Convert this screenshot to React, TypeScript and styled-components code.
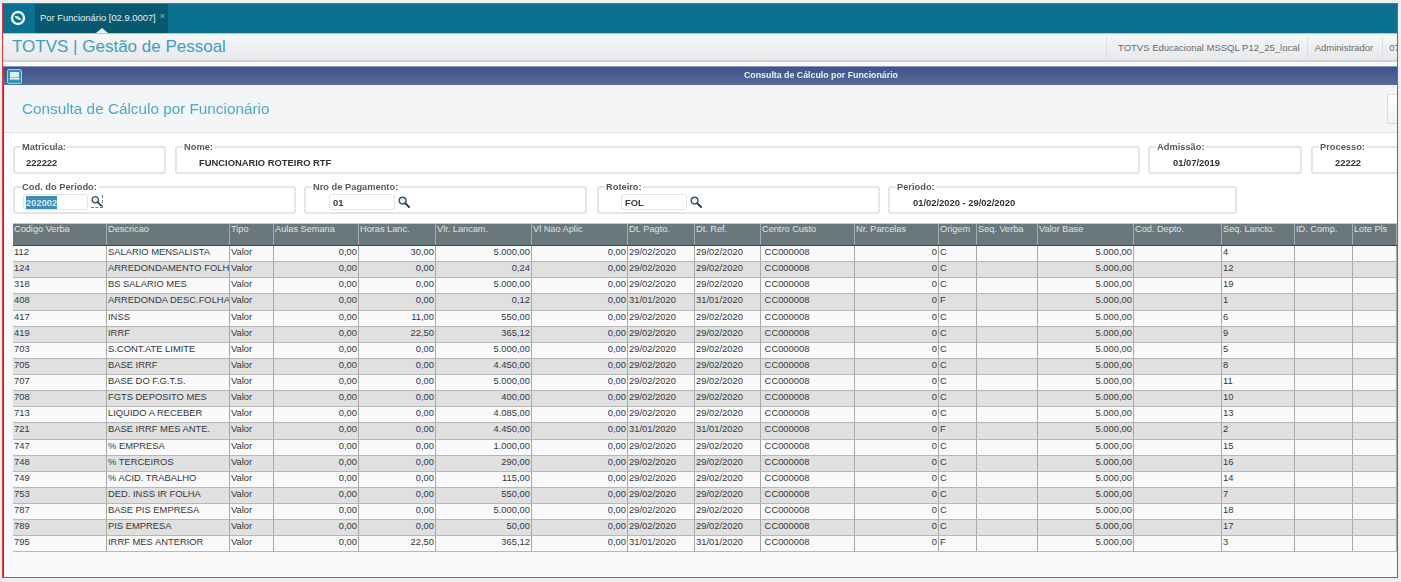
import React from "react";
import styled, { createGlobalStyle } from "styled-components";

const Global = createGlobalStyle`
  html, body { margin: 0; padding: 0; background: #efefef; overflow: hidden; }
  body { font-family: "Liberation Sans", Arial, sans-serif; }
`;

const Frame = styled.div`
  box-sizing: border-box;
  width: 1396px;
  height: 575px;
  margin: 3px 0 0 2px;
  border: 1px solid #e8383a;
  background: #fafafa;
  overflow: hidden;
`;
const Inner = styled.div`
  height: 100%;
  display: flex;
  flex-direction: column;
  filter: blur(0.35px);
`;
const TopBar = styled.div`
  height: 29px;
  flex: none;
  background: #0a7190;
  display: flex;
  align-items: stretch;
`;
const Logo = styled.div`
  width: 32px;
  box-sizing: border-box;
  padding: 0 0 2px 7px;
  display: flex;
  align-items: center;
`;
const Tab = styled.div`
  position: relative;
  width: 133px;
  background: #07596f;
  color: #e6eef1;
  font-size: 9.4px;
  display: flex;
  align-items: center;
  padding: 0 0 3px 5px;
  box-sizing: border-box;
  gap: 4px;
  white-space: nowrap;
  &::after {
    content: "";
    position: absolute;
    left: 61px;
    bottom: 0;
    border-left: 6px solid transparent;
    border-right: 6px solid transparent;
    border-bottom: 5px solid #eef2f4;
  }
`;
const TabClose = styled.span`
  color: #9fbcc6;
  font-size: 9px;
  margin-top: -2px;
`;
const AppBar = styled.div`
  height: 26px;
  flex: none;
  border-top: 1px solid #b9c2c7;
  border-bottom: 2px solid #cfd1d3;
  background: linear-gradient(#f6f7f9, #e6e8eb);
  display: flex;
  align-items: center;
  justify-content: space-between;
  padding-left: 9px;
  overflow: hidden;
`;
const Brand = styled.div`
  font-size: 17px;
  color: #3f9fc3;
  white-space: nowrap;
`;
const Status = styled.div`
  display: flex;
  align-items: center;
  height: 100%;
  font-size: 9.5px;
  color: #666c70;
  white-space: nowrap;
  flex: none;
  width: 291px;
`;
const StatusItem = styled.span`
  border-left: 1px solid #dcdfe2;
  padding: 5px 7px 5px 11px;
  &:nth-child(2) { padding: 5px 9px 5px 7px; }
  &:last-child { padding: 5px 0 5px 6px; }
`;
const WindowArea = styled.div`
  flex: 1;
  min-height: 0;
  margin-top: 4px;
  border-left: 1px solid #3f5288;
  display: flex;
  flex-direction: column;
  background: #fafafa;
`;
const TitleBar = styled.div`
  height: 19px;
  flex: none;
  margin-left: -1px;
  padding-left: 4px;
  background: linear-gradient(#3f5288, #566a9e);
  border-top: 1px solid #8a97b8;
  box-sizing: border-box;
  display: flex;
  align-items: center;
  color: #eef0f6;
  font-size: 8.8px;
  font-weight: 700;
`;
const WinIcon = styled.div`
  width: 15px;
  height: 15px;
  flex: none;
  box-sizing: border-box;
  border-radius: 2px;
  border: 1px solid #a9cfdd;
  background: #2f93b5;
  display: flex;
  align-items: center;
  justify-content: center;
`;
const WinTitle = styled.div`
  flex: none;
  width: 1598px;
  text-align: center;
  margin-top: -2px;
`;
const PageHead = styled.div`
  height: 48px;
  flex: none;
  border-bottom: 1px solid #dedfe0;
  background: #f3f5f6;
  display: flex;
  align-items: center;
  justify-content: space-between;
  padding-left: 18px;
  box-sizing: border-box;
`;
const PageTitle = styled.h1`
  margin: 0;
  font-size: 15.3px;
  font-weight: 400;
  color: #4aa9c9;
`;
const HeadButton = styled.div`
  width: 9px;
  height: 28px;
  border: 1px solid #dcdcdc;
  border-right: none;
  border-radius: 2px 0 0 2px;
  background: linear-gradient(#fff, #f0f0f0);
`;
const Form = styled.div`
  background: #fff;
  height: 90px;
  flex: none;
  padding: 9px 0 0 9px;
  box-sizing: border-box;
  overflow: hidden;
`;
const FieldRow = styled.div<{ $top?: number }>`
  display: flex;
  margin-top: ${(p) => p.$top ?? 0}px;
  height: 32px;
`;
const Field = styled.fieldset<{ $w: number; $gap: number }>`
  flex: none;
  box-sizing: border-box;
  width: ${(p) => p.$w}px;
  margin: 0 ${(p) => p.$gap}px 0 0;
  height: 32px;
  padding: 0 0 0 8px;
  min-width: 0;
  border: 2px solid #e4e5e6;
  border-radius: 3px;
  display: flex;
  align-items: center;
`;
const Legend = styled.legend`
  font-size: 9.3px;
  font-weight: 700;
  color: #515a66;
  padding: 0 1px;
  margin-left: -2px;
  line-height: 10px;
  white-space: nowrap;
`;
const Value = styled.span<{ $left: number }>`
  font-size: 9.4px;
  font-weight: 700;
  color: #2d3134;
  padding-left: ${(p) => p.$left}px;
  white-space: nowrap;
`;
const Input = styled.div<{ $left: number; $w: number }>`
  box-sizing: border-box;
  width: ${(p) => p.$w}px;
  height: 16px;
  margin-left: ${(p) => p.$left}px;
  border: 1px solid #e1e3e5;
  border-radius: 3px;
  background: #fff;
  font-size: 9.4px;
  font-weight: 700;
  color: #3a3f43;
  display: flex;
  align-items: center;
  padding-left: 3px;
`;
const Selected = styled.span`
  background: #3b8fb5;
  color: #dceaf0;
  padding: 1px 0;
  margin-left: -1px;
`;
const SearchBtn = styled.div<{ $focus?: boolean }>`
  box-sizing: border-box;
  width: 12px;
  height: 13px;
  margin: -1px 0 0 3px;
  display: flex;
  align-items: center;
  justify-content: center;
  border-bottom: ${(p) => (p.$focus ? "1px dashed #77818a" : "none")};
  border-right: ${(p) => (p.$focus ? "1px dashed #77818a" : "none")};
`;
const Table = styled.div`
  margin-left: 9px;
  flex: none;
`;
const cols = "94px 123px 44px 85px 77px 96px 96px 67px 66px 94px 84px 38px 61px 96px 88px 73px 58px 44px";
const HeadRow = styled.div`
  display: grid;
  grid-template-columns: ${cols};
  height: 23px;
  background: #6b787b;
  border-top: 1px solid #c6c9ca;
  border-bottom: 1px solid #3d4649;
  box-sizing: border-box;
`;
const HeadCell = styled.div`
  color: #dfe4e6;
  font-size: 9.2px;
  padding: 0 0 0 1px;
  border-right: 1px solid #a4acae;
  white-space: nowrap;
  overflow: hidden;
  line-height: 10px;
`;
const Row = styled.div<{ $even: boolean }>`
  display: grid;
  grid-template-columns: ${cols};
  height: 16.14px;
  box-sizing: border-box;
  background: ${(p) => (p.$even ? "#e0e0e0" : "#fafafa")};
  border-bottom: 1px solid #b7b7b7;
`;
const Cell = styled.div<{ $right?: boolean }>`
  color: #33383d;
  font-size: 9.4px;
  line-height: 12px;
  padding: 0 ${(p) => (p.$right ? 1 : 0)}px 0 1px;
  text-align: ${(p) => (p.$right ? "right" : "left")};
  border-right: 1px solid #a8a8a8;
  white-space: nowrap;
  overflow: hidden;
`;

const Glass = () => (
  <svg width="12" height="12" viewBox="0 0 12 12" fill="none">
    <circle cx="4.6" cy="4.6" r="3.4" stroke="#3f5566" strokeWidth="1.4" fill="#eef4f7" />
    <path d="M7.3 7.3 11 11" stroke="#2f4250" strokeWidth="2" strokeLinecap="round" />
  </svg>
);

const headers = ["Codigo Verba","Descricao","Tipo","Aulas Semana","Horas Lanc.","Vlr. Lancam.","Vl Nao Aplic","Dt. Pagto.","Dt. Ref.","Centro Custo","Nr. Parcelas","Origem","Seq. Verba","Valor Base","Cod. Depto.","Seq. Lancto.","ID. Comp.","Lote Pls"];

type D = [string, string, string, string, string, string, string, string];
const rows: D[] = [
  ["112","SALARIO MENSALISTA","30,00","5.000,00","29/02/2020","29/02/2020","C","4"],
  ["124","ARREDONDAMENTO FOLHA","0,00","0,24","29/02/2020","29/02/2020","C","12"],
  ["318","BS SALARIO MES","0,00","5.000,00","29/02/2020","29/02/2020","C","19"],
  ["408","ARREDONDA DESC.FOLHA","0,00","0,12","31/01/2020","31/01/2020","F","1"],
  ["417","INSS","11,00","550,00","29/02/2020","29/02/2020","C","6"],
  ["419","IRRF","22,50","365,12","29/02/2020","29/02/2020","C","9"],
  ["703","S.CONT.ATE LIMITE","0,00","5.000,00","29/02/2020","29/02/2020","C","5"],
  ["705","BASE IRRF","0,00","4.450,00","29/02/2020","29/02/2020","C","8"],
  ["707","BASE DO F.G.T.S.","0,00","5.000,00","29/02/2020","29/02/2020","C","11"],
  ["708","FGTS DEPOSITO MES","0,00","400,00","29/02/2020","29/02/2020","C","10"],
  ["713","LIQUIDO A RECEBER","0,00","4.085,00","29/02/2020","29/02/2020","C","13"],
  ["721","BASE IRRF MES ANTE.","0,00","4.450,00","31/01/2020","31/01/2020","F","2"],
  ["747","% EMPRESA","0,00","1.000,00","29/02/2020","29/02/2020","C","15"],
  ["748","% TERCEIROS","0,00","290,00","29/02/2020","29/02/2020","C","16"],
  ["749","% ACID. TRABALHO","0,00","115,00","29/02/2020","29/02/2020","C","14"],
  ["753","DED. INSS IR FOLHA","0,00","550,00","29/02/2020","29/02/2020","C","7"],
  ["787","BASE PIS EMPRESA","0,00","5.000,00","29/02/2020","29/02/2020","C","18"],
  ["789","PIS EMPRESA","0,00","50,00","29/02/2020","29/02/2020","C","17"],
  ["795","IRRF MES ANTERIOR","22,50","365,12","31/01/2020","31/01/2020","F","3"],
];

export default function App() {
  return (
    <>
      <Global />
      <Frame>
        <Inner>
          <TopBar>
            <Logo>
              <svg width="16" height="16" viewBox="0 0 16 16" fill="none">
                <circle cx="8" cy="8" r="6" stroke="#eef5f7" strokeWidth="2.4" />
                <ellipse cx="8" cy="8" rx="3.6" ry="1.3" transform="rotate(30 8 8)" fill="#d9e8ed" />
              </svg>
            </Logo>
            <Tab>
              Por Funcionário [02.9.0007]
              <TabClose>×</TabClose>
            </Tab>
          </TopBar>
          <AppBar>
            <Brand>TOTVS | Gestão de Pessoal</Brand>
            <Status>
              <StatusItem>TOTVS Educacional MSSQL P12_25_local</StatusItem>
              <StatusItem>Administrador</StatusItem>
              <StatusItem>07</StatusItem>
            </Status>
          </AppBar>
          <WindowArea>
            <TitleBar>
              <WinIcon>
                <svg width="11" height="10" viewBox="0 0 11 10">
                  <rect x="1" y="1" width="9" height="5.5" fill="#dff0f6" />
                  <rect x="0.5" y="7" width="10" height="1.6" fill="#dff0f6" />
                </svg>
              </WinIcon>
              <WinTitle>Consulta de Cálculo por Funcionário</WinTitle>
            </TitleBar>
            <PageHead>
              <PageTitle>Consulta de Cálculo por Funcionário</PageTitle>
              <HeadButton />
            </PageHead>
            <Form>
              <FieldRow>
                <Field $w={153} $gap={9}>
                  <Legend>Matricula:</Legend>
                  <Value $left={3}>222222</Value>
                </Field>
                <Field $w={965} $gap={8}>
                  <Legend>Nome:</Legend>
                  <Value $left={14}>FUNCIONARIO ROTEIRO RTF</Value>
                </Field>
                <Field $w={154} $gap={9}>
                  <Legend>Admissão:</Legend>
                  <Value $left={15}>01/07/2019</Value>
                </Field>
                <Field $w={120} $gap={0}>
                  <Legend>Processo:</Legend>
                  <Value $left={14}>22222</Value>
                </Field>
              </FieldRow>
              <FieldRow $top={8}>
                <Field $w={283} $gap={8}>
                  <Legend>Cod. do Periodo:</Legend>
                  <Input $left={0} $w={65}>
                    <Selected>202002</Selected>
                  </Input>
                  <SearchBtn $focus>
                    <Glass />
                  </SearchBtn>
                </Field>
                <Field $w={283} $gap={10}>
                  <Legend>Nro de Pagamento:</Legend>
                  <Input $left={15} $w={66}>01</Input>
                  <SearchBtn>
                    <Glass />
                  </SearchBtn>
                </Field>
                <Field $w={283} $gap={8}>
                  <Legend>Roteiro:</Legend>
                  <Input $left={14} $w={66}>FOL</Input>
                  <SearchBtn>
                    <Glass />
                  </SearchBtn>
                </Field>
                <Field $w={349} $gap={0}>
                  <Legend>Periodo:</Legend>
                  <Value $left={15}>01/02/2020 - 29/02/2020</Value>
                </Field>
              </FieldRow>
            </Form>
            <Table>
              <HeadRow>
                {headers.map((h) => (
                  <HeadCell key={h}>{h}</HeadCell>
                ))}
              </HeadRow>
              {rows.map((r, i) => (
                <Row key={r[0]} $even={i % 2 === 1}>
                  <Cell>{r[0]}</Cell>
                  <Cell>{r[1]}</Cell>
                  <Cell>Valor</Cell>
                  <Cell $right>0,00</Cell>
                  <Cell $right>{r[2]}</Cell>
                  <Cell $right>{r[3]}</Cell>
                  <Cell $right>0,00</Cell>
                  <Cell>{r[4]}</Cell>
                  <Cell>{r[5]}</Cell>
                  <Cell>&nbsp;CC000008</Cell>
                  <Cell $right>0</Cell>
                  <Cell>{r[6]}</Cell>
                  <Cell />
                  <Cell $right>5.000,00</Cell>
                  <Cell />
                  <Cell>{r[7]}</Cell>
                  <Cell />
                  <Cell />
                </Row>
              ))}
            </Table>
          </WindowArea>
        </Inner>
      </Frame>
    </>
  );
}
